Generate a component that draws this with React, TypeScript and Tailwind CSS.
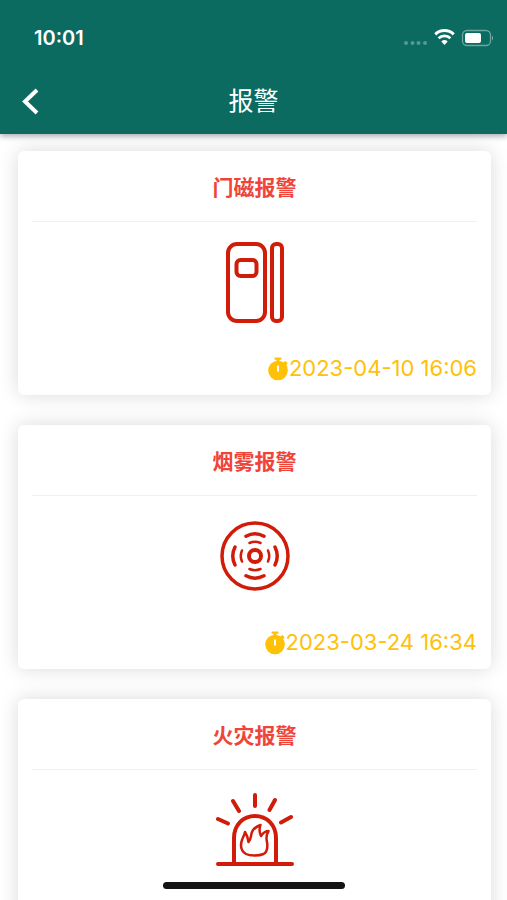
import type { ReactNode } from "react";

function DoorIcon() {
  return (
    <svg width="60" height="82" viewBox="0 0 60 82" fill="none" stroke="#d01c08" strokeWidth="4" aria-hidden="true">
      <rect x="3" y="3" width="37" height="77" rx="9" />
      <rect x="11.500" y="19" width="20" height="16" rx="4" />
      <rect x="47" y="3" width="10" height="77" rx="4" />
    </svg>
  );
}

function SmokeIcon() {
  return (
    <svg
      width="72"
      height="72"
      viewBox="-36 -36 72 72"
      fill="none"
      stroke="#d01c08"
      strokeLinecap="round"
      aria-hidden="true"
    >
      <circle r="33" strokeWidth="3.500" />
      <circle r="6" strokeWidth="4" />
      <path d="M-9 -19.800Q0 -24.500 9 -19.800M-9 19.800Q0 24.500 9 19.800" strokeWidth="3.500" />
      <path d="M-20 -9Q-24.500 0 -20 9M20 -9Q24.500 0 20 9" strokeWidth="3.500" />
      <path d="M-5.500 -13Q0 -15.500 5.500 -13M-5.500 13Q0 15.500 5.500 13" strokeWidth="2.500" />
      <path d="M-13 -5.500Q-15.500 0 -13 5.500M13 -5.500Q15.500 0 13 5.500" strokeWidth="2.500" />
    </svg>
  );
}

function FireIcon() {
  return (
    <svg
      width="80"
      height="76"
      viewBox="0 0 80 76"
      fill="none"
      stroke="#d01c08"
      strokeWidth="4"
      strokeLinecap="round"
      strokeLinejoin="round"
      aria-hidden="true"
    >
      <path d="M3 72H77M19 71V46C19 33 28 24 40 24S61 33 61 46V71" />
      <path d="M40 3V14M18 9L24 19M60 8L54.500 18M3 27L13 31.500M76 25L66 30.500" />
      <path
        d="M31 62C26 59 25 54 27 48C28 45 29.500 43 30 40C32 43 33 46 33.500 50C37 47 35 42 38 38C40 35.500 43 34 45.500 33C44 37 44 40 46 44C48 41 50.500 39 53.500 39C51 43 51 46 52 50C53 56 52 60 48.500 62C44 64 35 64 31 62Z"
        strokeWidth="2.500"
      />
    </svg>
  );
}

function TimerIcon() {
  return (
    <svg width="22" height="24" viewBox="0 0 22 24" fill="#ffc107" aria-hidden="true">
      <rect x="7.500" y="0.500" width="7" height="2.200" rx="0.600" />
      <rect x="9.500" y="2" width="3" height="3" />
      <path d="M16 5.500L18.500 4L20.500 6L19 9Z" />
      <circle cx="11" cy="13.500" r="9.800" />
      <rect x="10" y="8.500" width="2" height="6" rx="0.500" fill="#fff" />
    </svg>
  );
}

function StatusIcons() {
  return (
    <svg width="90" height="20" viewBox="0 0 90 20" fill="none" aria-hidden="true">
      <g fill="#fff" opacity="0.300">
        <circle cx="3" cy="15" r="2" />
        <circle cx="9.500" cy="15" r="2" />
        <circle cx="15.500" cy="15" r="2" />
        <circle cx="22" cy="15" r="2" />
      </g>
      <path d="M32.300 6.300C37.500 1.300 45.500 1.300 50.700 6.300" stroke="#fff" strokeWidth="3" />
      <path d="M35.600 10.200C38.800 7.200 44.200 7.200 47.400 10.200" stroke="#fff" strokeWidth="2.800" />
      <path d="M38.300 13.400Q41.500 10.600 44.700 13.400L41.500 17Z" fill="#fff" />
      <rect x="59.500" y="2.500" width="28" height="15" rx="4.500" stroke="#fff" strokeOpacity="0.400" strokeWidth="1.300" />
      <rect x="62" y="5" width="16" height="10" rx="2" fill="#fff" />
      <path d="M89 7.500Q91 10 89 12.500Z" fill="#fff" fillOpacity="0.500" />
    </svg>
  );
}

const alarms: { title: string; time: string; icon: ReactNode }[] = [
  { title: "门磁报警", time: "2023-04-10 16:06", icon: <DoorIcon /> },
  { title: "烟雾报警", time: "2023-03-24 16:34", icon: <SmokeIcon /> },
  { title: "火灾报警", time: "", icon: <FireIcon /> },
];

function AlarmCard({ title, time, icon }: { title: string; time: string; icon: ReactNode }) {
  return (
    <section className="rounded-md bg-white px-3.5 shadow-[0_0_20px_rgba(0,0,0,0.15)]">
      <h2 className="flex h-[71px] items-center justify-center border-b border-[#f0f0f0] pt-1 text-[21px] font-bold text-[#f04438]">
        {title}
      </h2>
      <div className="flex h-[120px] items-center justify-center">{icon}</div>
      <div className="flex h-[53px] items-center justify-end text-[22px] text-[#ffc107]">
        {time && (
          <>
            <TimerIcon />
            <time>{time}</time>
          </>
        )}
      </div>
    </section>
  );
}

export default function App() {
  return (
    <div className="relative flex h-screen flex-col overflow-hidden bg-white font-['Inter','Noto_Sans_CJK_SC',sans-serif]">
      <header className="relative z-10 shrink-0 bg-[#0c6b60] text-white shadow-[0_2px_6px_rgba(0,0,0,0.35)]">
        <div className="flex h-[70px] items-center justify-between pt-1.5 pr-3.5 pl-8.5">
          <span className="text-[20px] font-semibold">10:01</span>
          <StatusIcons />
        </div>
        <div className="grid h-16 grid-cols-[64px_1fr_64px] items-center">
          <button type="button" aria-label="返回" className="flex h-full items-center pl-5">
            <svg width="22" height="30" viewBox="0 0 22 30" fill="none" stroke="#fff" strokeWidth="4">
              <path d="M17 3L5 14.500L17 26" />
            </svg>
          </button>
          <h1 className="text-center text-[25px]">报警</h1>
        </div>
      </header>
      <main className="flex min-h-0 flex-1 flex-col gap-[30px] overflow-y-auto py-[17px] pr-4 pl-4.5 [scrollbar-width:none]">
        {alarms.map((alarm) => (
          <AlarmCard key={alarm.title} {...alarm} />
        ))}
      </main>
      <div className="absolute bottom-[11px] left-1/2 h-[7px] w-[182px] -translate-x-1/2 rounded-full bg-[#141414]" />
    </div>
  );
}
